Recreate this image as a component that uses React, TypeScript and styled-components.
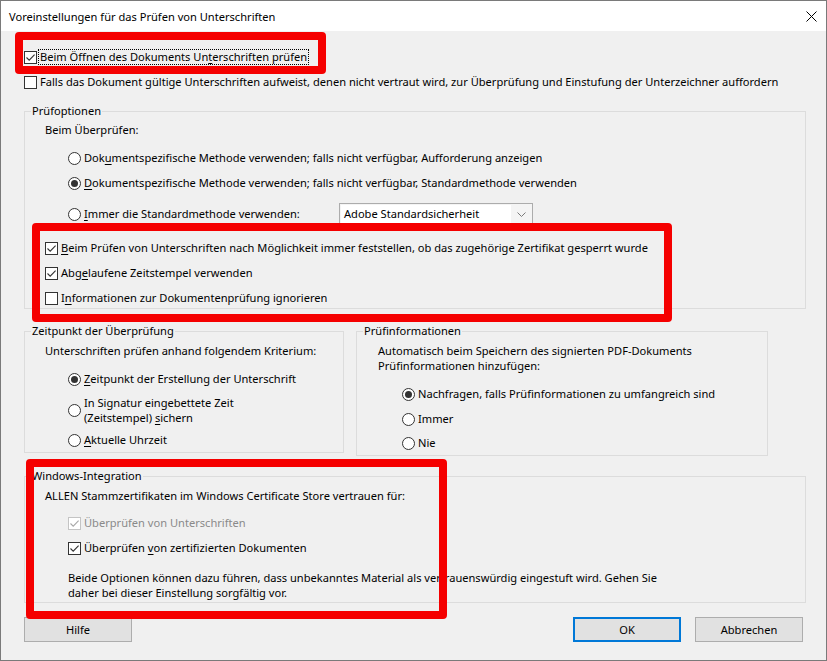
import React from 'react';
import styled, { createGlobalStyle, css } from 'styled-components';

const Global = createGlobalStyle`
  html, body { margin: 0; padding: 0; background: #f0f0f0; }
  body { font-family: "Noto Sans", "DejaVu Sans", sans-serif; font-size: 11.1px; color: #000; }
  * { box-sizing: border-box; }
`;

const Window = styled.div`
  position: relative;
  width: 827px;
  height: 661px;
  border: 1px solid #7a7a7a;
  background: #f0f0f0;
  display: flex;
  flex-direction: column;
  overflow: hidden;
`;

const TitleBar = styled.div`
  height: 30px;
  flex: 0 0 30px;
  background: #fff;
  display: flex;
  align-items: center;
  justify-content: space-between;
  padding: 0 9px 0 8px;
  font-size: 11.1px;
`;

const Body = styled.div`
  display: flex;
  flex-direction: column;
  padding: 0 20px 0 23px;
`;

const Row = styled.div<{ $indent?: number; $top?: number; $h?: number }>`
  display: flex;
  align-items: center;
  height: ${(p) => p.$h ?? 20}px;
  margin-top: ${(p) => p.$top ?? 0}px;
  padding-left: ${(p) => p.$indent ?? 0}px;
  white-space: nowrap;
`;

const Text = styled.div<{ $indent?: number; $top?: number; $lh?: number; $color?: string }>`
  margin-top: ${(p) => p.$top ?? 0}px;
  padding-left: ${(p) => p.$indent ?? 0}px;
  line-height: ${(p) => p.$lh ?? 16}px;
  white-space: nowrap;
  color: ${(p) => p.$color ?? '#000'};
`;

const Box = styled.span<{ $disabled?: boolean }>`
  flex: 0 0 13px;
  width: 13px;
  height: 13px;
  border: 1px solid ${(p) => (p.$disabled ? '#c4c4c4' : '#333')};
  background: #fff;
  display: flex;
  align-items: center;
  justify-content: center;
`;

const Circle = styled.span`
  flex: 0 0 13px;
  width: 13px;
  height: 13px;
  border: 1px solid #333;
  border-radius: 50%;
  background: #fff;
  display: flex;
  align-items: center;
  justify-content: center;
`;

const Dot = styled.span`
  width: 7px;
  height: 7px;
  border-radius: 50%;
  background: #333;
`;

const Label = styled.span<{ $focus?: boolean; $disabled?: boolean; $lh?: number; $w?: number }>`
  margin-left: 3px;
  line-height: ${(p) => p.$lh ?? 16}px;
  color: ${(p) => (p.$disabled ? '#8a8a8a' : '#000')};
  ${(p) => p.$w && css`flex: 0 0 ${p.$w}px;`}
  ${(p) =>
    p.$focus &&
    css`
      margin-left: 1px;
      padding: 0 1px;
      border: 1px dotted #000;
      line-height: 14px;
    `}
`;

const U = styled.span`
  text-decoration: underline;
  text-underline-offset: 2px;
`;

const Group = styled.fieldset<{ $top: number; $pb: number; $w: number }>`
  margin: ${(p) => p.$top}px 0 0 0;
  padding: 0 0 ${(p) => p.$pb}px 0;
  border: 1px solid #dcdcdc;
  min-width: 0;
  width: ${(p) => p.$w}px;
  flex: 0 0 auto;
`;

const Legend = styled.legend`
  margin-left: 6px;
  padding: 0 1px;
  line-height: 16px;
  height: 16px;
`;

const GroupRow = styled.div`
  display: flex;
  align-items: flex-start;
  gap: 12px;
`;

const Select = styled.div`
  width: 194px;
  height: 22px;
  border: 1px solid #acacac;
  background: #f4f4f4;
  display: flex;
  align-items: stretch;
  padding: 1px;
`;

const SelectValue = styled.span`
  flex: 1;
  background: #fff;
  padding-left: 3px;
  line-height: 17px;
`;

const SelectArrow = styled.span`
  flex: 0 0 20px;
  display: flex;
  align-items: center;
  justify-content: center;
`;

const ButtonRow = styled.div`
  display: flex;
  justify-content: space-between;
  margin-top: 14px;
  padding-right: 3px;
`;

const ButtonGroup = styled.div`
  display: flex;
  gap: 14px;
`;

const Button = styled.button<{ $default?: boolean }>`
  width: 108px;
  height: 25px;
  background: #e1e1e1;
  border: 1px solid #adadad;
  font: inherit;
  color: #000;
  padding: 0;
  ${(p) =>
    p.$default &&
    css`
      border: 2px solid #0078d7;
    `}
`;

const Mark = styled.div<{ $l: number; $t: number; $w: number; $h: number }>`
  position: absolute;
  left: ${(p) => p.$l}px;
  top: ${(p) => p.$t}px;
  width: ${(p) => p.$w}px;
  height: ${(p) => p.$h}px;
  border: 8px solid #f50000;
  border-radius: 4px;
  pointer-events: none;
`;

const Check = ({ on = false, disabled = false }: { on?: boolean; disabled?: boolean }) => (
  <Box $disabled={disabled}>
    {on && (
      <svg width="11" height="11" viewBox="0 0 11 11">
        <path d="M1.5 5.5 L4.2 8.2 L9.6 2.6" fill="none" stroke={disabled ? '#a8a8a8' : '#333'} strokeWidth="1.1" />
      </svg>
    )}
  </Box>
);

const Radio = ({ on = false }: { on?: boolean }) => <Circle>{on && <Dot />}</Circle>;

export default function App() {
  return (
    <>
      <Global />
      <Window>
        <TitleBar>
          <span>Voreinstellungen für das Prüfen von Unterschriften</span>
          <svg width="11" height="11" viewBox="0 0 11 11">
            <path d="M0.5 0.5 L10.5 10.5 M10.5 0.5 L0.5 10.5" stroke="#000" strokeWidth="1" />
          </svg>
        </TitleBar>
        <Body>
          <Row $top={16}>
            <Check on />
            <Label $focus>
              Beim Öffnen des Dokuments Un<U>t</U>erschriften prüfen
            </Label>
          </Row>
          <Row $top={5}>
            <Check />
            <Label>
              Falls das Dokument gültige Unterschriften aufweist, denen nicht vertraut wird, zur Überprüfung und Einstufung der Unterzeichner auffordern
            </Label>
          </Row>

          <Group $top={11} $pb={0} $w={782}>
            <Legend>Prüfoptionen</Legend>
            <Text $indent={20} $top={3}>Beim Überprüfen:</Text>
            <Row $indent={43} $top={10}>
              <Radio />
              <Label>
                Dok<U>u</U>mentspezifische Methode verwenden; falls nicht verfügbar, Aufforderung anzeigen
              </Label>
            </Row>
            <Row $indent={43} $top={5}>
              <Radio on />
              <Label>
                <U>D</U>okumentspezifische Methode verwenden; falls nicht verfügbar, Standardmethode verwenden
              </Label>
            </Row>
            <Row $indent={43} $top={10} $h={22}>
              <Radio />
              <Label $w={255}>
                <U>I</U>mmer die Standardmethode verwenden:
              </Label>
              <Select>
                <SelectValue>Adobe Standardsicherheit</SelectValue>
                <SelectArrow>
                  <svg width="9" height="5" viewBox="0 0 9 5">
                    <path d="M0.5 0.5 L4.5 4.5 L8.5 0.5" fill="none" stroke="#7a7a7a" strokeWidth="1" />
                  </svg>
                </SelectArrow>
              </Select>
            </Row>
            <Row $indent={20} $top={13}>
              <Check on />
              <Label>
                <U>B</U>eim Prüfen von Unterschriften nach Möglichkeit immer feststellen, ob das zugehörige Zertifikat gesperrt wurde
              </Label>
            </Row>
            <Row $indent={20} $top={5}>
              <Check on />
              <Label>
                Abg<U>e</U>laufene Zeitstempel verwenden
              </Label>
            </Row>
            <Row $indent={20} $top={5}>
              <Check />
              <Label>
                I<U>n</U>formationen zur Dokumentenprüfung ignorieren
              </Label>
            </Row>
          </Group>

          <GroupRow>
            <Group $top={14} $pb={2} $w={320}>
              <Legend>Zeitpunkt der Überprüfung</Legend>
              <Text $indent={20} $top={4}>Unterschriften prüfen anhand folgendem Kriterium:</Text>
              <Row $indent={43} $top={10}>
                <Radio on />
                <Label>
                  <U>Z</U>eitpunkt der Erstellung der Unterschrift
                </Label>
              </Row>
              <Row $indent={43} $top={6} $h={30}>
                <Radio />
                <Label $lh={15}>
                  In Signatur eingebettete Zeit
                  <br />
                  (Zeitstempel) <U>s</U>ichern
                </Label>
              </Row>
              <Row $indent={43} $top={5}>
                <Radio />
                <Label>
                  <U>A</U>ktuelle Uhrzeit
                </Label>
              </Row>
            </Group>
            <Group $top={14} $pb={2} $w={412}>
              <Legend>Prüfinformationen</Legend>
              <Text $indent={21} $top={4} $lh={15}>
                Automatisch beim Speichern des signierten PDF-Dokuments
                <br />
                Prüfinformationen hinzufügen:
              </Text>
              <Row $indent={45} $top={11}>
                <Radio on />
                <Label>Nachfragen, falls Prüfinformationen zu umfangreich sind</Label>
              </Row>
              <Row $indent={45} $top={5}>
                <Radio />
                <Label>Immer</Label>
              </Row>
              <Row $indent={45} $top={4}>
                <Radio />
                <Label>Nie</Label>
              </Row>
            </Group>
          </GroupRow>

          <Group $top={12} $pb={2} $w={782}>
            <Legend>Windows-Integration</Legend>
            <Text $indent={20} $top={4}>ALLEN Stammzertifikaten im Windows Certificate Store vertrauen für:</Text>
            <Row $indent={43} $top={9}>
              <Check on disabled />
              <Label $disabled>Überprüfen von Unterschriften</Label>
            </Row>
            <Row $indent={43} $top={5}>
              <Check on />
              <Label>
                Überprüfen <U>v</U>on zertifizierten Dokumenten
              </Label>
            </Row>
            <Text $indent={43} $top={12} $lh={15}>
              Beide Optionen können dazu führen, dass unbekanntes Material als vertrauenswürdig eingestuft wird. Gehen Sie
              <br />
              daher bei dieser Einstellung sorgfältig vor.
            </Text>
          </Group>

          <ButtonRow>
            <Button>Hilfe</Button>
            <ButtonGroup>
              <Button $default>OK</Button>
              <Button>Abbrechen</Button>
            </ButtonGroup>
          </ButtonRow>
        </Body>

        <Mark $l={14} $t={31} $w={311} $h={42} />
        <Mark $l={31} $t={222} $w={640} $h={99} />
        <Mark $l={25} $t={458} $w={421} $h={160} />
      </Window>
    </>
  );
}
